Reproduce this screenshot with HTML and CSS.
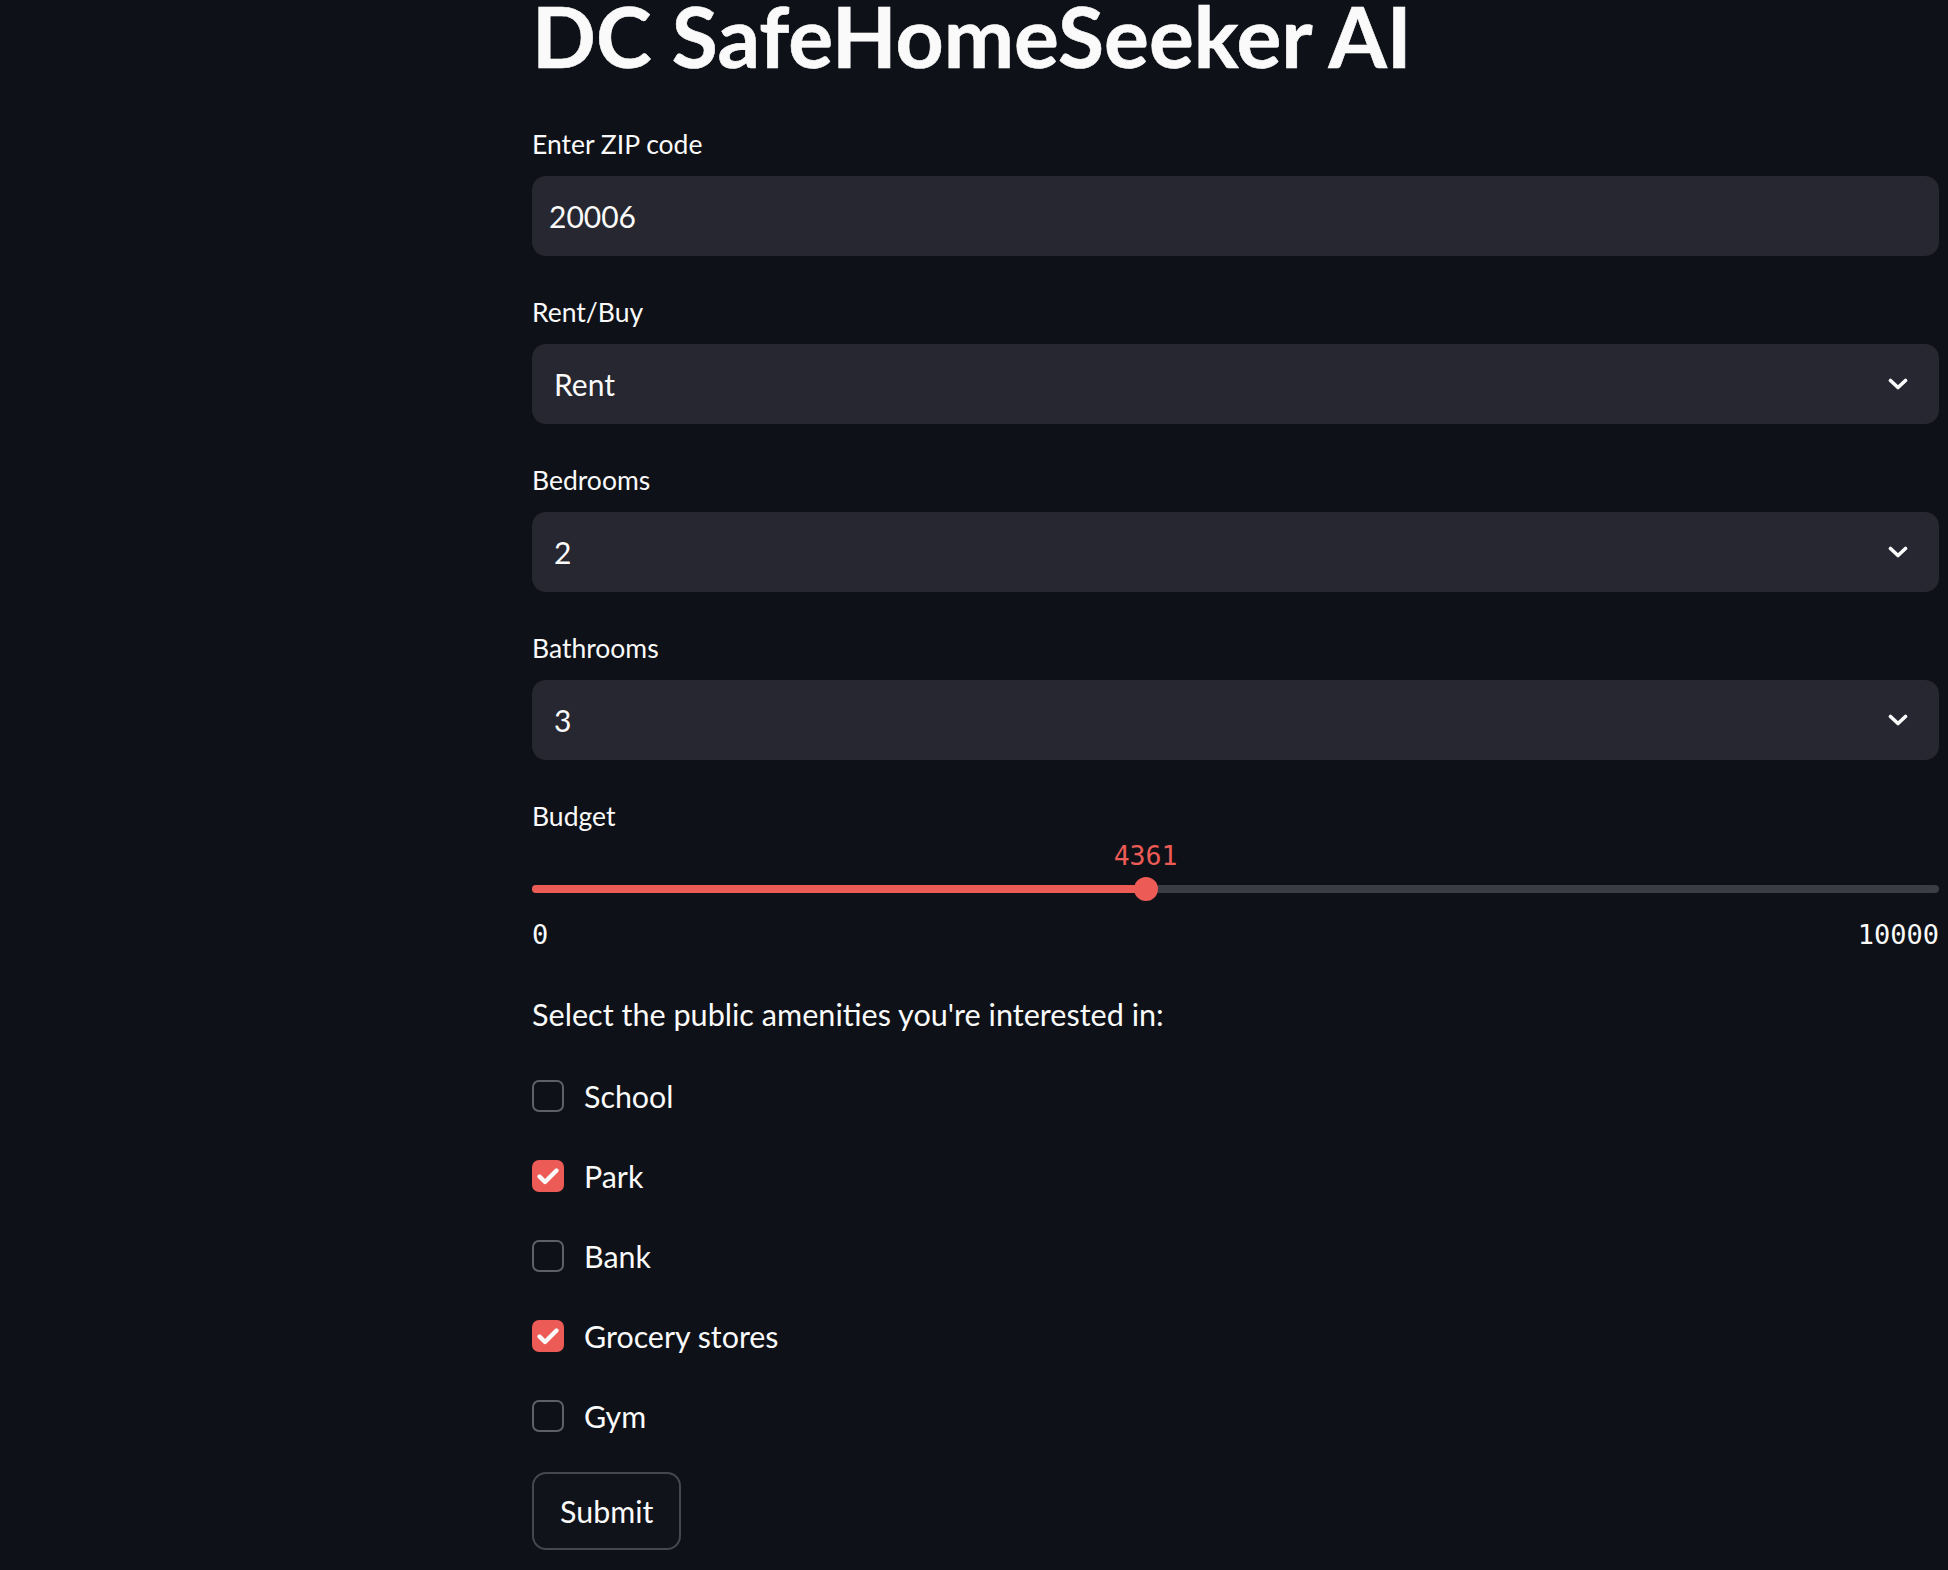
FILE: index.html
```html
<!DOCTYPE html>
<html lang="en">
<head>
<meta charset="utf-8">
<title>DC SafeHomeSeeker AI</title>
<link rel="stylesheet" href="styles.css">
</head>
<body>
<div class="app">
  <main class="main">
    <h1 class="title">DC SafeHomeSeeker AI</h1>

    <div class="field">
      <div class="label">Enter ZIP code</div>
      <div class="input">20006</div>
    </div>

    <div class="field">
      <div class="label">Rent/Buy</div>
      <div class="input select"><span class="select-value">Rent</span>
        <svg class="chevron" viewBox="0 0 20 12" width="20" height="12"><path d="M2.5 2.5 L10 9.5 L17.5 2.5" fill="none" stroke="#fafafa" stroke-width="3.6" stroke-linecap="round" stroke-linejoin="round"/></svg>
      </div>
    </div>

    <div class="field">
      <div class="label">Bedrooms</div>
      <div class="input select"><span class="select-value">2</span>
        <svg class="chevron" viewBox="0 0 20 12" width="20" height="12"><path d="M2.5 2.5 L10 9.5 L17.5 2.5" fill="none" stroke="#fafafa" stroke-width="3.6" stroke-linecap="round" stroke-linejoin="round"/></svg>
      </div>
    </div>

    <div class="field">
      <div class="label">Bathrooms</div>
      <div class="input select"><span class="select-value">3</span>
        <svg class="chevron" viewBox="0 0 20 12" width="20" height="12"><path d="M2.5 2.5 L10 9.5 L17.5 2.5" fill="none" stroke="#fafafa" stroke-width="3.6" stroke-linecap="round" stroke-linejoin="round"/></svg>
      </div>
    </div>

    <div class="field">
      <div class="label label-slider">Budget</div>
      <div class="slider">
        <div class="slider-value-row"><span class="slider-value" style="left:43.61%">4361</span></div>
        <div class="slider-track-row">
          <div class="slider-track">
            <div class="slider-fill" style="width:43.61%"></div>
            <div class="slider-thumb" style="left:43.61%"></div>
          </div>
        </div>
        <div class="slider-range"><span>0</span><span>10000</span></div>
      </div>
    </div>

    <p class="text">Select the public amenities you're interested in:</p>

    <label class="check"><span class="box"></span><span class="check-text">School</span></label>
    <label class="check"><span class="box checked"><svg viewBox="0 0 32 32" width="32" height="32"><path d="M7.5 16.5 L13 22 L24.5 10.5" fill="none" stroke="#fafafa" stroke-width="4.4" stroke-linecap="round" stroke-linejoin="round"/></svg></span><span class="check-text">Park</span></label>
    <label class="check"><span class="box"></span><span class="check-text">Bank</span></label>
    <label class="check"><span class="box checked"><svg viewBox="0 0 32 32" width="32" height="32"><path d="M7.5 16.5 L13 22 L24.5 10.5" fill="none" stroke="#fafafa" stroke-width="4.4" stroke-linecap="round" stroke-linejoin="round"/></svg></span><span class="check-text">Grocery stores</span></label>
    <label class="check"><span class="box"></span><span class="check-text">Gym</span></label>

    <button class="button" type="button">Submit</button>
  </main>
</div>
</body>
</html>
```

FILE: styles.css
```css
* {
  box-sizing: border-box;
  margin: 0;
  padding: 0;
}

html, body {
  background: #0e1117;
}

body {
  overflow: hidden;
  font-family: Lato, "Noto Sans", sans-serif;
  color: #fafafa;
}

.app {
  padding-left: 532px;
}

.main {
  width: 1407px;
  display: flex;
  flex-direction: column;
  gap: 32px;
}

.title {
  font-size: 84px;
  font-weight: 700;
  line-height: 71px;
  height: 88px;
  padding-bottom: 17px;
  white-space: nowrap;
  -webkit-text-stroke: 0.6px #fafafa;
}

.field {
  display: flex;
  flex-direction: column;
}

.label {
  height: 48px;
  display: flex;
  align-items: center;
  font-size: 26.5px;
  margin-bottom: 8px;
}

.label-slider {
  margin-bottom: 0;
}

.input {
  height: 80px;
  background: #262730;
  border-radius: 14px;
  display: flex;
  align-items: center;
  padding: 0 17px;
  font-size: 30px;
}

.select {
  justify-content: space-between;
  padding: 0 31px 0 22px;
}

.chevron {
  display: block;
}

.slider {
  display: flex;
  flex-direction: column;
}

.slider-value-row {
  position: relative;
  height: 32px;
}

.slider-value {
  position: absolute;
  top: 0;
  transform: translateX(-50%);
  line-height: 32px;
  font-family: "DejaVu Sans Mono", "Liberation Mono", monospace;
  font-size: 26.5px;
  color: #ec5b55;
}

.slider-track-row {
  height: 34px;
  display: flex;
  align-items: center;
}

.slider-track {
  position: relative;
  width: 100%;
  height: 8px;
  border-radius: 4px;
  background: #3b3d46;
}

.slider-fill {
  height: 100%;
  border-radius: 4px;
  background: #ec5b55;
}

.slider-thumb {
  position: absolute;
  top: 50%;
  width: 24px;
  height: 24px;
  border-radius: 50%;
  background: #ec5b55;
  transform: translate(-50%, -50%);
}

.slider-range {
  display: flex;
  justify-content: space-between;
  padding-top: 14px;
  line-height: 30px;
  font-family: "DejaVu Sans Mono", "Liberation Mono", monospace;
  font-size: 27px;
}

.text {
  padding-top: 7px;
  line-height: 51px;
  font-size: 30.6px;
}

.check {
  height: 48px;
  display: flex;
  align-items: center;
  gap: 20px;
  font-size: 30.4px;
}

.box {
  width: 32px;
  height: 32px;
  flex: none;
  border: 2px solid #5d6068;
  border-radius: 7px;
  background: #0e1117;
}

.box.checked {
  border: none;
  background: #ec5b55;
}

.box svg {
  display: block;
}

.button {
  align-self: flex-start;
  height: 78px;
  padding: 0 26px;
  border: 2px solid #45474e;
  border-radius: 14px;
  background: #10131a;
  color: #fafafa;
  font-family: Lato, "Noto Sans", sans-serif;
  font-size: 30.4px;
}
```
